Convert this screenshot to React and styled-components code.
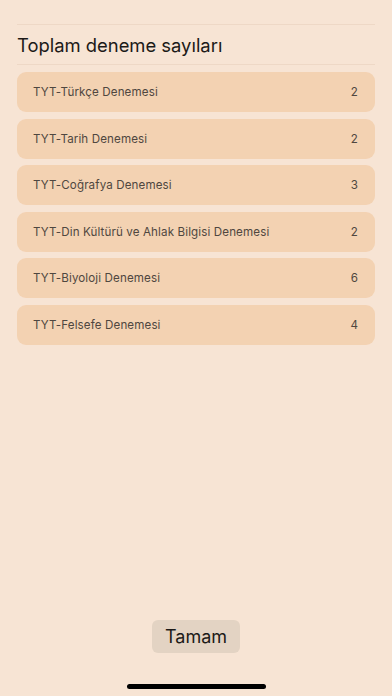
import React from "react";
import styled, { createGlobalStyle } from "styled-components";

const GlobalStyle = createGlobalStyle`
  html, body {
    margin: 0;
    padding: 0;
    background: #f7e4d4;
  }
  body {
    font-family: "Inter", "Liberation Sans", sans-serif;
  }
`;

const Screen = styled.div`
  width: 392px;
  height: 696px;
  display: flex;
  flex-direction: column;
  background: #f7e4d4;
  overflow: hidden;
`;

const Content = styled.div`
  flex: 1;
  padding: 24px 17px 0;
`;

const Header = styled.div`
  border-top: 1px solid #eed8c6;
  border-bottom: 1px solid #eed8c6;
  height: 39px;
  display: flex;
  align-items: center;
`;

const Title = styled.h1`
  margin: 0;
  font-size: 18.4px;
  font-weight: 400;
  color: #1c1a18;
`;

const List = styled.div`
  display: flex;
  flex-direction: column;
  gap: 6.6px;
  margin-top: 7px;
`;

const Row = styled.div`
  height: 40px;
  border-radius: 9px;
  background: #f3d2b2;
  display: flex;
  align-items: center;
  justify-content: space-between;
  padding: 0 17px 0 16px;
  font-size: 11.6px;
  letter-spacing: 0.12px;
  color: #4f4740;
`;

const Footer = styled.div`
  display: flex;
  flex-direction: column;
  align-items: center;
  padding-bottom: 7px;
`;

const Button = styled.button`
  width: 88px;
  height: 33px;
  border: none;
  border-radius: 6px;
  background: #e3d3c3;
  font-family: "Inter", "Liberation Sans", sans-serif;
  font-size: 18px;
  color: #1c1a18;
  padding: 0;
`;

const HomeIndicator = styled.div`
  width: 139px;
  height: 5px;
  border-radius: 3px;
  background: #000;
  margin-top: 31px;
`;

const items = [
  { title: "TYT-Türkçe Denemesi", count: 2 },
  { title: "TYT-Tarih Denemesi", count: 2 },
  { title: "TYT-Coğrafya Denemesi", count: 3 },
  { title: "TYT-Din Kültürü ve Ahlak Bilgisi Denemesi", count: 2 },
  { title: "TYT-Biyoloji Denemesi", count: 6 },
  { title: "TYT-Felsefe Denemesi", count: 4 },
];

function App() {
  return (
    <>
      <GlobalStyle />
      <Screen>
        <Content>
          <Header>
            <Title>Toplam deneme sayıları</Title>
          </Header>
          <List>
            {items.map((item) => (
              <Row key={item.title}>
                <span>{item.title}</span>
                <span>{item.count}</span>
              </Row>
            ))}
          </List>
        </Content>
        <Footer>
          <Button>Tamam</Button>
          <HomeIndicator />
        </Footer>
      </Screen>
    </>
  );
}

export default App;
